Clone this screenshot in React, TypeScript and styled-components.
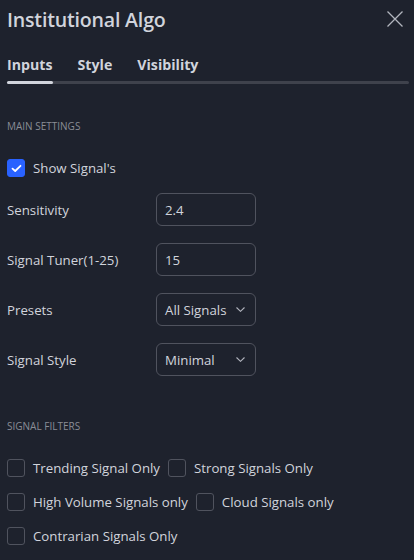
import styled, { createGlobalStyle } from "styled-components";

const GlobalStyle = createGlobalStyle`
  body {
    margin: 0;
    background: #1e222d;
    font-family: "Open Sans", "Noto Sans", sans-serif;
    color: #d1d4dc;
  }
`

const Panel = styled.div`
  width: 414px;
  height: 560px;
  box-sizing: border-box;
  padding: 0 5px 0 7px;
  background: #1e222d;
  overflow: hidden;
`

const Header = styled.div`
  height: 38px;
  display: flex;
  align-items: center;
  justify-content: space-between;
`

const Title = styled.div`
  font-size: 19.6px;
  font-weight: 600;
  color: #d1d4dc;
  letter-spacing: -0.2px;
`

const Close = styled.button`
  border: none;
  background: transparent;
  padding: 0;
  margin-right: 5px;
  width: 18px;
  height: 18px;
  display: flex;
  cursor: pointer;
`

const Tabs = styled.div`
  display: flex;
  gap: 25px;
  margin-top: 16px;
  height: 20px;
  align-items: center;
`

const Tab = styled.div<{ $active?: boolean }>`
  font-size: 14.2px;
  font-weight: 700;
  color: #d1d4dc;
`

const TabTrack = styled.div`
  margin-top: 7px;
  height: 3px;
  border-radius: 2px;
  background: #3f424c;
  display: flex;
`

const TabThumb = styled.div`
  width: 46px;
  height: 3px;
  border-radius: 2px;
  background: #d1d4dc;
`

const SectionTitle = styled.div<{ $top: number }>`
  margin-top: ${p => p.$top}px;
  height: 14px;
  line-height: 14px;
  font-size: 10px;
  color: #8a8d96;
  text-transform: uppercase;
`

const CheckRow = styled.div<{ $top: number }>`
  margin-top: ${p => p.$top}px;
  display: flex;
  gap: 8px;
  align-items: center;
  height: 18px;
`

const CheckItem = styled.label`
  display: flex;
  align-items: center;
  gap: 8px;
  font-size: 13.25px;
  color: #d1d4dc;
  white-space: nowrap;
`

const Box = styled.span<{ $checked?: boolean }>`
  width: 18px;
  height: 18px;
  box-sizing: border-box;
  border-radius: 3px;
  border: 1px solid ${p => (p.$checked ? "#2962ff" : "#50535e")};
  background: ${p => (p.$checked ? "#2962ff" : "transparent")};
  display: flex;
  align-items: center;
  justify-content: center;
`

const FieldRow = styled.div<{ $top: number }>`
  margin-top: ${p => p.$top}px;
  display: flex;
  align-items: center;
  height: 33px;
`

const Label = styled.div`
  width: 149px;
  font-size: 13.25px;
  color: #d1d4dc;
`

const Field = styled.div`
  width: 100px;
  height: 33px;
  box-sizing: border-box;
  border: 1px solid #50535e;
  border-radius: 6px;
  padding: 0 10px 0 8px;
  display: flex;
  align-items: center;
  justify-content: space-between;
  font-size: 13.25px;
  color: #d1d4dc;
`

const Check = () => (
  <svg width="11" height="9" viewBox="0 0 11 9">
    <path d="M1.5 4.6 L4.2 7 L9.5 1.8" fill="none" stroke="#fff" strokeWidth="1.8" strokeLinecap="round" strokeLinejoin="round" />
  </svg>
)

const Chevron = () => (
  <svg width="9" height="5" viewBox="0 0 9 5">
    <path d="M0.5 0.5 L4.5 4.3 L8.5 0.5" fill="none" stroke="#b2b5be" strokeWidth="1.1" />
  </svg>
)

const Checkbox = ({ label, checked }: { label: string; checked?: boolean }) => (
  <CheckItem>
    <Box $checked={checked}>{checked && <Check />}</Box>
    {label}
  </CheckItem>
)

const fields = [
  { label: "Sensitivity", value: "2.4" },
  { label: "Signal Tuner(1-25)", value: "15" },
  { label: "Presets", value: "All Signals", select: true },
  { label: "Signal Style", value: "Minimal", select: true },
]

const filters = [
  ["Trending Signal Only", "Strong Signals Only"],
  ["High Volume Signals only", "Cloud Signals only"],
  ["Contrarian Signals Only"],
]

const App = () => {
  return (
    <>
      <GlobalStyle />
      <Panel>
        <Header>
          <Title>Institutional Algo</Title>
          <Close>
            <svg width="18" height="18" viewBox="0 0 18 18">
              <path d="M1.5 1.5 L16.5 16.5 M16.5 1.5 L1.5 16.5" stroke="#b2b5be" strokeWidth="1.3" />
            </svg>
          </Close>
        </Header>
        <Tabs>
          <Tab $active>Inputs</Tab>
          <Tab>Style</Tab>
          <Tab>Visibility</Tab>
        </Tabs>
        <TabTrack>
          <TabThumb />
        </TabTrack>

        <SectionTitle $top={35}>Main Settings</SectionTitle>
        <CheckRow $top={26}>
          <Checkbox label="Show Signal's" checked />
        </CheckRow>
        {fields.map((f, i) => (
          <FieldRow key={i} $top={i === 0 ? 16 : 17}>
            <Label>{f.label}</Label>
            <Field>
              <span>{f.value}</span>
              {f.select && <Chevron />}
            </Field>
          </FieldRow>
        ))}

        <SectionTitle $top={43}>Signal Filters</SectionTitle>
        {filters.map((row, i) => (
          <CheckRow key={i} $top={i === 0 ? 26 : 16}>
            {row.map(l => (
              <Checkbox key={l} label={l} />
            ))}
          </CheckRow>
        ))}
      </Panel>
    </>
  )
}

export default App
